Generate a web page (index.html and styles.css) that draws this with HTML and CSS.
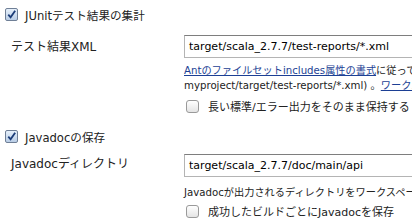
FILE: index.html
```html
<!DOCTYPE html>
<html lang="ja">
<head>
    <meta charset="UTF-8">
    <title>ビルド後の処理</title>
    <link rel="stylesheet" href="styles.css">
</head>
<body>
    <div class="config">
        <div class="section">
            <label class="section-head">
                <span class="box checked"><svg viewBox="0 0 12 12"><path d="M2.5 6.2 L5 9 L10 2" /></svg></span>
                JUnitテスト結果の集計
            </label>
            <div class="row">
                <div class="label">テスト結果XML</div>
                <div class="field">
                    <div class="input">target/scala_2.7.7/test-reports/*.xml</div>
                    <div class="desc">
                        <a href="#">Antのファイルセットincludes属性の書式</a>に従って、レポートファイルを指定します(例:<br>
                        myproject/target/test-reports/*.xml) 。<a href="#">ワークスペースルート</a>からの相対パスです。
                    </div>
                    <label class="option">
                        <span class="box"></span>
                        長い標準/エラー出力をそのまま保持する
                    </label>
                </div>
            </div>
        </div>

        <div class="section javadoc">
            <label class="section-head">
                <span class="box checked"><svg viewBox="0 0 12 12"><path d="M2.5 6.2 L5 9 L10 2" /></svg></span>
                Javadocの保存
            </label>
            <div class="row">
                <div class="label">Javadocディレクトリ</div>
                <div class="field">
                    <div class="input">target/scala_2.7.7/doc/main/api</div>
                    <div class="desc">Javadocが出力されるディレクトリをワークスペースからの相対パスで指定します。</div>
                    <label class="option">
                        <span class="box"></span>
                        成功したビルドごとにJavadocを保存
                    </label>
                </div>
            </div>
        </div>
    </div>
</body>
</html>
```

FILE: styles.css
```css
* {
    box-sizing: border-box;
    margin: 0;
    padding: 0;
}

body {
    font-family: "DejaVu Sans", "Noto Sans CJK JP", sans-serif;
    font-size: 11px;
    color: #222;
    background: #fff;
}

.config {
    width: 412px;
    height: 222px;
    overflow: hidden;
    padding: 8px 0 0 5px;
}

.section-head {
    display: flex;
    align-items: center;
    gap: 7px;
    height: 13px;
    font-size: 11.6px;
}

.row {
    display: flex;
    margin-top: 14px;
}

.label {
    width: 179px;
    flex: none;
    padding: 2px 0 0 6px;
    font-size: 12px;
}

.field {
    flex: none;
    width: 420px;
    white-space: nowrap;
}

.input {
    width: 300px;
    height: 23px;
    padding: 4px 0 0 4px;
    border: 1px solid #b4b4b4;
    border-top-color: #7e7e7e;
    font-size: 11px;
    color: #000;
}

.desc {
    margin-top: 5px;
    font-size: 10.2px;
    line-height: 15px;
}

.desc a {
    color: #1c3f94;
}

.option {
    display: flex;
    align-items: center;
    gap: 9px;
    margin: 5px 0 0 2px;
    font-size: 11px;
}

.box {
    width: 13px;
    height: 13px;
    flex: none;
    border: 1px solid #9a9a9a;
    border-radius: 3px;
    background: linear-gradient(#ffffff, #e4e4e4);
}

.box.checked {
    border-color: #6f7f96;
    border-radius: 2px;
    background: linear-gradient(#e6f0fb, #b9cde6);
}

.box svg {
    width: 11px;
    height: 11px;
    display: block;
}

.box path {
    fill: none;
    stroke: #1b3c78;
    stroke-width: 2;
}

/* second block sits a little tighter in the original */
.section + .section {
    margin-top: 16px;
}

.javadoc .row {
    margin-top: 11px;
}

.javadoc .label {
    padding-top: 0;
}

.javadoc .desc {
    margin-top: 8px;
}

.javadoc .option {
    margin-top: 3px;
}
```
